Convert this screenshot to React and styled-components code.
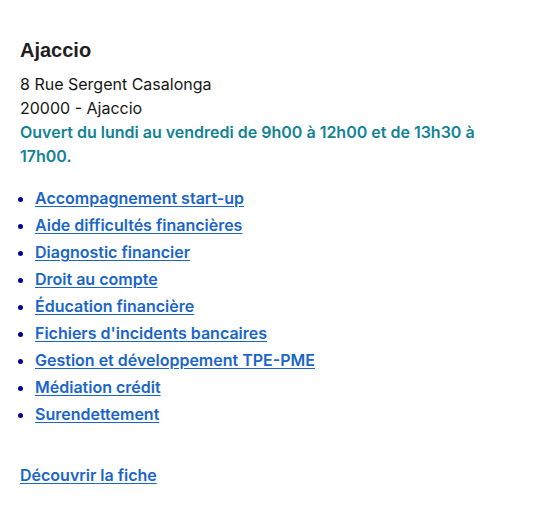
import React from 'react';
import styled, { createGlobalStyle } from "styled-components";

const services = [
  "Accompagnement start-up",
  "Aide difficultés financières",
  "Diagnostic financier",
  "Droit au compte",
  "Éducation financière",
  "Fichiers d'incidents bancaires",
  "Gestion et développement TPE-PME",
  "Médiation crédit",
  "Surendettement",
];

function App() {
  return (
    <>
      <GlobalStyle />
      <Card>
        <Title>Ajaccio</Title>
        <Address>
          8 Rue Sergent Casalonga
          <br />
          20000 - Ajaccio
        </Address>
        <Hours>Ouvert du lundi au vendredi de 9h00 à 12h00 et de 13h30 à 17h00.</Hours>
        <ServiceList>
          {services.map((s) => (
            <Service key={s}>
              <Link href="#">{s}</Link>
            </Service>
          ))}
        </ServiceList>
        <Link href="#">Découvrir la fiche</Link>
      </Card>
    </>
  );
}

const GlobalStyle = createGlobalStyle`
  body {
    margin: 0;
    background: #fff;
    font-family: Inter, "Noto Sans", sans-serif;
    color: #161616;
  }
`;

const Card = styled.div`
  padding: 36px 20px 20px;
  font-size: 16px;
  line-height: 24px;
`;

const Title = styled.h3`
  margin: 0 0 8px;
  font-family: "Liberation Sans", Arial, sans-serif;
  font-size: 20px;
  line-height: 28px;
  font-weight: 700;
  color: #1e1e1e;
`;

const Address = styled.p`
  margin: 0;
`;

const Hours = styled.p`
  margin: 0;
  font-weight: 600;
  color: #128396;
`;

const ServiceList = styled.ul`
  margin: 18px 0 34px;
  padding: 0 0 0 15px;
  list-style: disc;

  li::marker {
    color: #000091;
  }
`;

const Service = styled.li`
  padding-bottom: 3px;
`;

const Link = styled.a`
  color: #1a65c9;
  font-weight: 600;
  text-decoration: underline;
  text-underline-offset: 2px;
`;

export default App
